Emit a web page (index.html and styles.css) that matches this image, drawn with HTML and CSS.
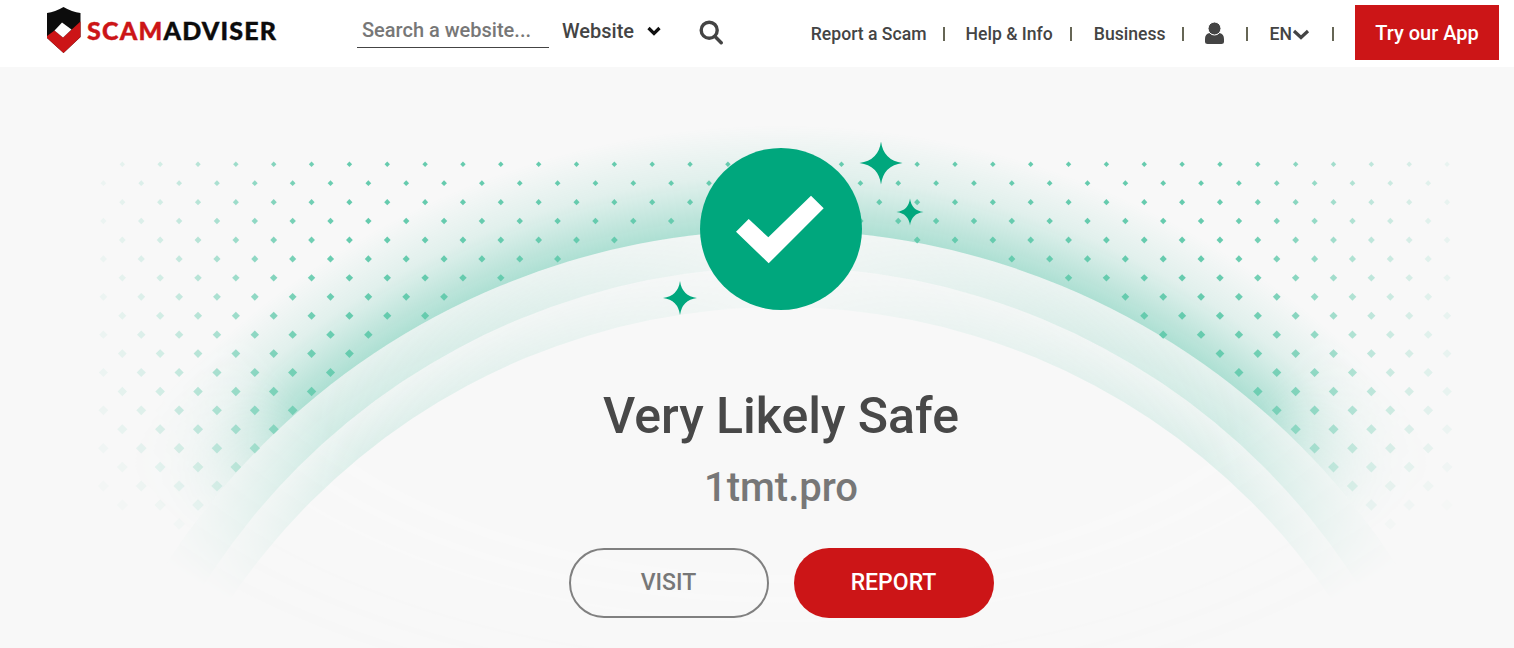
FILE: index.html
```html
<!DOCTYPE html>
<html lang="en">
<head>
    <meta charset="UTF-8">
    <meta name="viewport" content="width=device-width, initial-scale=1.0">
    <title>Very Likely Safe - 1tmt.pro</title>
    <link rel="stylesheet" href="styles.css">
</head>
<body>
    <header class="site-header">
        <a class="logo" href="#">
            <svg class="logo-shield" viewBox="47 7 34 46" xmlns="http://www.w3.org/2000/svg">
                <path d="M47 13 Q55 12 63.5 7 Q72 12 80.5 13 V37 L63.5 53 L47 38 Z" fill="#0c0c0c"></path>
                <path d="M47 36 L54.5 30.5 L63 37.5 L80.5 21.5 V37 L63.5 53 L47 38 Z" fill="#cc1517"></path>
                <path d="M62 22.5 L54.5 30.5 L63 37.5 L71.5 29.5 Z" fill="#fff"></path>
            </svg>
            <span class="logo-text"><span class="logo-red">SCAM</span>ADVISER</span>
        </a>
        <form class="search-form">
            <input type="text" class="search-input" placeholder="Search a website...">
            <span class="search-type">Website</span>
            <svg class="chevron chevron-dark" viewBox="0 0 14 10" xmlns="http://www.w3.org/2000/svg">
                <polyline points="1.5 2 7 7.5 12.5 2"></polyline>
            </svg>
            <svg class="search-icon" viewBox="0 0 24 25" xmlns="http://www.w3.org/2000/svg">
                <circle cx="10.2" cy="10.2" r="8"></circle>
                <line x1="16" y1="16.5" x2="22.2" y2="22.8"></line>
            </svg>
        </form>
        <nav class="main-nav">
            <a href="#">Report a Scam</a>
            <span class="nav-sep"></span>
            <a href="#">Help &amp; Info</a>
            <span class="nav-sep"></span>
            <a href="#">Business</a>
            <span class="nav-sep"></span>
            <svg class="user-icon" viewBox="0 0 19 22" xmlns="http://www.w3.org/2000/svg">
                <path d="M4.4 11 C1.5 11.5 0 14 0 17 V20 Q0 22 2.5 22 H16.5 Q19 22 19 20 V17 C19 14 17.500 11.500 14.600 11 Q9.500 15 4.400 11 Z"></path>
                <circle cx="9.500" cy="6.500" r="6.500"></circle>
            </svg>
            <span class="nav-sep"></span>
            <span class="lang">EN<svg class="chevron" viewBox="0 0 18 11" xmlns="http://www.w3.org/2000/svg"><polyline points="2 2 9 8.500 16 2"></polyline></svg></span>
            <span class="nav-sep"></span>
            <a class="app-button" href="#">Try our App</a>
        </nav>
    </header>

    <main class="hero">
        <svg class="hero-bg" viewBox="0 67 1514 581" xmlns="http://www.w3.org/2000/svg">
            <defs>
                <radialGradient id="glow" gradientUnits="userSpaceOnUse" cx="781" cy="963" r="838">
                    <stop offset="0.875" stop-color="#00a77d" stop-opacity="0.3"></stop>
                    <stop offset="0.94" stop-color="#00a77d" stop-opacity="0.09"></stop>
                    <stop offset="1" stop-color="#00a77d" stop-opacity="0"></stop>
                </radialGradient>
                <radialGradient id="band-outer" gradientUnits="userSpaceOnUse" cx="781" cy="950" r="733">
                    <stop offset="0.932" stop-color="#00a77d" stop-opacity="0.17"></stop>
                    <stop offset="1" stop-color="#00a77d" stop-opacity="0.05"></stop>
                </radialGradient>
                <radialGradient id="band-inner" gradientUnits="userSpaceOnUse" cx="781" cy="972" r="705">
                    <stop offset="0.943" stop-color="#00a77d" stop-opacity="0.12"></stop>
                    <stop offset="1" stop-color="#00a77d" stop-opacity="0.03"></stop>
                </radialGradient>
                <radialGradient id="fade-edges" gradientUnits="userSpaceOnUse" cx="0" cy="0" r="1" gradientTransform="translate(781 260) scale(820 460)">
                    <stop offset="0.66" stop-color="#fff"></stop>
                    <stop offset="1" stop-color="#000"></stop>
                </radialGradient>
                <radialGradient id="fade-glow" gradientUnits="userSpaceOnUse" cx="0" cy="0" r="1" gradientTransform="translate(781 260) scale(780 420)">
                    <stop offset="0.72" stop-color="#fff"></stop>
                    <stop offset="1" stop-color="#000"></stop>
                </radialGradient>
                <linearGradient id="fade-x" gradientUnits="userSpaceOnUse" x1="0" y1="0" x2="1562" y2="0">
                    <stop offset="0.2" stop-color="#fff"></stop>
                    <stop offset="0.5" stop-color="#222"></stop>
                    <stop offset="0.8" stop-color="#fff"></stop>
                </linearGradient>
                <mask id="arc-mask" maskUnits="userSpaceOnUse" x="0" y="67" width="1514" height="581">
                    <rect x="0" y="67" width="1514" height="581" fill="url(#fade-edges)"></rect>
                </mask>
                <mask id="glow-mask" maskUnits="userSpaceOnUse" x="0" y="67" width="1514" height="581">
                    <rect x="0" y="67" width="1514" height="581" fill="url(#fade-glow)"></rect>
                </mask>
                <mask id="side-mask" maskUnits="userSpaceOnUse" x="0" y="67" width="1514" height="581">
                    <rect x="0" y="67" width="1514" height="581" fill="url(#fade-x)"></rect>
                </mask>
            </defs>
            <g mask="url(#arc-mask)">
                <g mask="url(#glow-mask)">
                    <circle cx="781" cy="963" r="838" fill="url(#glow)"></circle>
                </g>
                <circle cx="781" cy="963" r="733" fill="#f8f8f8"></circle>
                <g mask="url(#side-mask)">
                    <circle cx="781" cy="963" r="733" fill="url(#band-outer)"></circle>
                </g>
                <circle cx="781" cy="950" r="683" fill="#f8f8f8"></circle>
                <g mask="url(#side-mask)">
                    <circle cx="781" cy="950" r="683" fill="url(#band-inner)"></circle>
                </g>
                <circle cx="781" cy="972" r="665" fill="#f8f8f8"></circle>
            </g>
            <g id="dots" fill="#66cbae"></g>
        </svg>

        <svg class="verdict-badge" viewBox="637 140 288 176" xmlns="http://www.w3.org/2000/svg">
            <circle cx="781" cy="229" r="81" fill="#00a77d"></circle>
            <polygon points="736,231.700 748.700,219 768.300,237.300 811,195.700 823.700,208.300 768.700,263.300" fill="#fff"></polygon>
            <path d="M881 141.500 Q883.500 160.500 902.500 163 Q883.500 165.500 881 184.500 Q878.500 165.500 859.500 163 Q878.500 160.500 881 141.500 Z" fill="#00a77d"></path>
            <path d="M910 198.500 Q911.500 210.500 923.500 212 Q911.500 213.500 910 225.500 Q908.500 213.500 896.500 212 Q908.500 210.500 910 198.500 Z" fill="#00a77d"></path>
            <path d="M680 281 Q682 296 697 298 Q682 300 680 315 Q678 300 663 298 Q678 296 680 281 Z" fill="#00a77d"></path>
        </svg>
        <h1 class="verdict-title">Very Likely Safe</h1>
        <p class="verdict-domain">1tmt.pro</p>
        <div class="verdict-actions">
            <a class="pill pill-outline" href="#">VISIT</a>
            <a class="pill pill-red" href="#">REPORT</a>
        </div>
    </main>

    <script src="dots.js"></script>
</body>
</html>
```

FILE: styles.css
```css
:root {
    --red: #cc1517;
    --dark: #444;
    --grey: #777;
    --background-color: #f8f8f8;
}

* {
    margin: 0;
    padding: 0;
    box-sizing: border-box;
}

html, body {
    height: 100%;
    overflow: hidden;
}

body {
    font-family: Roboto, "Liberation Sans", sans-serif;
    background-color: var(--background-color);
    color: var(--dark);
}

a {
    color: inherit;
    text-decoration: none;
}

.site-header {
    height: 67px;
    background-color: white;
    display: flex;
    align-items: center;
    padding: 0 15px 2px 47px;
}

.logo {
    display: flex;
    align-items: center;
    gap: 6px;
    width: 310px;
    margin-bottom: 5px;
}

.logo-shield {
    width: 34px;
    height: 46px;
}

.logo-text {
    font-family: Lato, sans-serif;
    font-weight: 900;
    font-size: 25px;
    letter-spacing: 1.2px;
    color: #0c0c0c;
    -webkit-text-stroke: 0.4px currentColor;
}

.logo-red {
    color: var(--red);
}

.search-form {
    display: flex;
    align-items: center;
}

.search-input {
    width: 192px;
    height: 34px;
    margin-bottom: 3px;
    border: none;
    border-bottom: 1px solid var(--dark);
    outline: none;
    background: none;
    padding: 0 5px 2px;
    font-family: inherit;
    font-size: 20px;
    font-weight: 500;
}

.search-input::placeholder {
    color: var(--grey);
    opacity: 1;
}

.search-type {
    font-size: 20px;
    font-weight: 500;
    margin-left: 13px;
    margin-bottom: 3px;
}

.chevron {
    fill: none;
    stroke: var(--dark);
    stroke-width: 3.2;
}

.chevron-dark {
    width: 14px;
    height: 10px;
    stroke: #111;
    margin-left: 13px;
    margin-bottom: 3px;
}

.search-icon {
    width: 24px;
    height: 25px;
    margin-left: 38px;
    fill: none;
    stroke: var(--dark);
    stroke-width: 3.4;
    stroke-linecap: round;
}

.main-nav {
    margin-left: auto;
    display: flex;
    align-items: center;
    font-size: 17.6px;
    font-weight: 500;
}

.main-nav > a:not(.app-button) {
    margin-top: 2px;
}

.nav-sep {
    width: 2px;
    height: 14px;
    margin: 2px 0 0;
    background-color: #666655;
}

.main-nav > a:nth-child(1) {
    margin-right: 16px;
}

.main-nav > a:nth-child(3) {
    margin: 2px 17px 0 21px;
}

.main-nav > a:nth-child(5) {
    margin: 2px 16px 0 22px;
}

.user-icon {
    width: 19px;
    height: 22px;
    margin: 0 22px 0 21px;
    fill: var(--dark);
}

.user-icon circle {
    stroke: white;
    stroke-width: 1;
}

.lang {
    display: flex;
    align-items: center;
    margin: 2px 22px 0 22px;
}

.lang .chevron {
    width: 18px;
    height: 11px;
    margin-top: 2px;
}

.app-button {
    margin-left: 21px;
    width: 144px;
    height: 55px;
    display: flex;
    align-items: center;
    justify-content: center;
    background-color: var(--red);
    color: white;
    font-size: 20px;
}

.hero {
    position: relative;
    height: 581px;
    padding: 73px 0 0 48px;
    display: flex;
    flex-direction: column;
    align-items: center;
    overflow: hidden;
}

.hero-bg {
    position: absolute;
    top: 0;
    left: 0;
    width: 1514px;
    height: 581px;
}

.verdict-badge,
.verdict-title,
.verdict-domain,
.verdict-actions {
    position: relative;
}

.verdict-badge {
    width: 288px;
    height: 176px;
}

.verdict-title {
    font-size: 50px;
    font-weight: 500;
    line-height: 60px;
    margin-top: 70px;
    color: #484848;
}

.verdict-domain {
    font-size: 40px;
    font-weight: 500;
    line-height: 48px;
    margin-top: 18px;
    color: var(--grey);
}

.verdict-actions {
    display: flex;
    gap: 25px;
    margin-top: 36px;
}

.pill {
    width: 200px;
    height: 70px;
    border-radius: 35px;
    display: flex;
    align-items: center;
    justify-content: center;
    padding-bottom: 2px;
    font-size: 23px;
    font-weight: 500;
}

.pill-outline {
    border: 2px solid #808080;
    color: var(--grey);
}

.pill-red {
    background-color: var(--red);
    color: white;
}
```

FILE: dots.js
```js
// the dotted field above the arc, dots grow and fade toward the edges
const dots = document.getElementById('dots');
const SVG_NS = 'http://www.w3.org/2000/svg';
const STEP = 37.85;
const CENTER_X = 781;
const CENTER_Y = 963;
const ARC_RADIUS = 733;

function ramp(value, from, to) {
    const t = Math.min(1, Math.max(0, (value - from) / (to - from)));
    return t * t * (3 - 2 * t);
}

for (let row = 0; row < 22; row++) {
    const y = 164.3 + row * (STEP / 2);
    const startX = row % 2 === 0 ? 122.3 : 103.4;

    for (let x = startX; x < 1460; x += STEP) {
        const dist = Math.hypot(x - CENTER_X, y - CENTER_Y);
        if (dist < ARC_RADIUS + 2) continue;

        const edge = Math.min(x, 1562 - x);
        const opacity = (0.04 + 0.96 * ramp(edge, 70, 360)) * (1 - ramp(y, 380, 560));
        if (opacity < 0.02) continue;

        const r = 2.7 + (y - 164) * 0.009;
        const dot = document.createElementNS(SVG_NS, 'polygon');
        dot.setAttribute('points', `${x},${y - r} ${x + r},${y} ${x},${y + r} ${x - r},${y}`);
        dot.setAttribute('opacity', opacity.toFixed(2));
        dots.appendChild(dot);
    }
}
```
